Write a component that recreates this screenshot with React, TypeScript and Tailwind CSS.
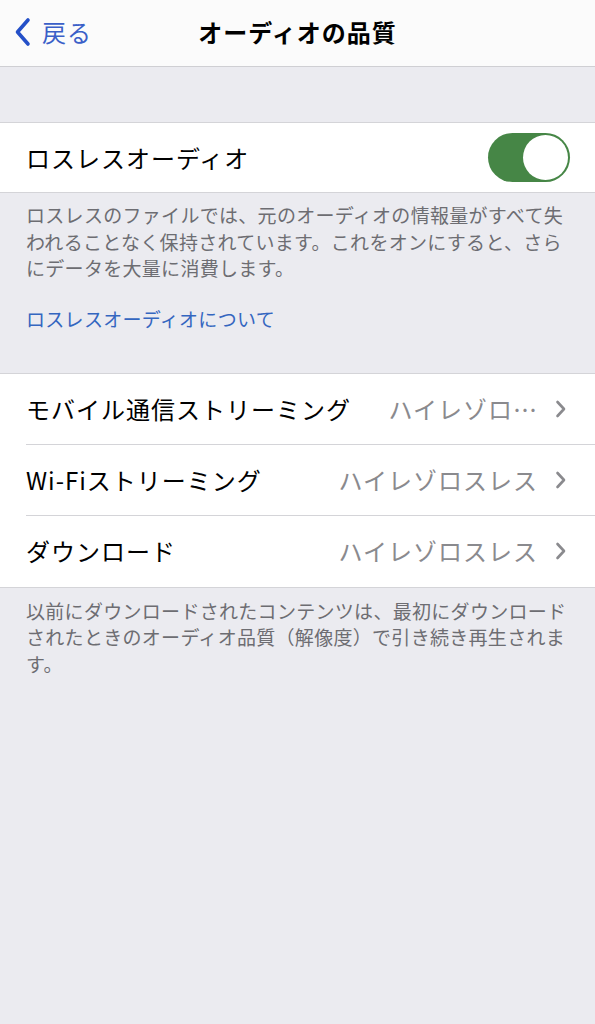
import React from 'react'

const FONT = { fontFamily: '"Noto Sans CJK JP", "Noto Sans", sans-serif' }

function Chevron() {
  return (
    <svg width="12" height="20" viewBox="0 0 12 20" fill="none" stroke="#8a8a8e" strokeWidth="2.6" strokeLinecap="round" strokeLinejoin="round">
      <polyline points="2.5 3 9 10 2.5 17" />
    </svg>
  )
}

function Row({ label, value, last }: { label: string; value: string; last?: boolean }) {
  return (
    <div className="flex h-[71px] items-center pl-[26px]">
      <div className={`flex h-full flex-1 items-center pr-[28px] ${last ? '' : 'border-b border-[#d4d4d8]'}`}>
        <span className="text-[24px] tracking-[1px] text-black whitespace-nowrap">{label}</span>
        <span className="ml-auto mr-[17px] text-[24px] tracking-[1px] text-[#8a8a8e] whitespace-nowrap">{value}</span>
        <Chevron />
      </div>
    </div>
  )
}

export default function App() {
  return (
    <div className="min-h-[1024px] w-[595px] bg-[#ebebf0]" style={FONT}>
      {/* Nav bar */}
      <div className="relative flex h-[67px] items-center border-b border-[#cfcfd3] bg-[#fbfbfb] pb-[3px]">
        <div className="flex items-center pl-[14px]">
          <svg width="18" height="30" viewBox="0 0 18 30" fill="none" stroke="#2450c8" strokeWidth="3.6" strokeLinecap="round" strokeLinejoin="round">
            <polyline points="14 3 3.5 15 14 27" />
          </svg>
          <span className="ml-[10px] text-[24px] tracking-[1px] text-[#3a5fc8]">戻る</span>
        </div>
        <div className="pointer-events-none absolute inset-x-0 top-0 flex h-full items-center justify-center pb-[3px]">
          <span className="text-[24px] font-bold tracking-[1px] text-black">オーディオの品質</span>
        </div>
      </div>

      <div className="h-[55px]" />

      {/* Lossless toggle */}
      <div className="flex h-[71px] items-center border-y border-[#d4d4d8] bg-white pl-[26px] pr-[25px]">
        <span className="text-[24px] tracking-[1px] text-black">ロスレスオーディオ</span>
        <div className="ml-auto flex h-[49px] w-[82px] items-center justify-end rounded-full bg-[#468646] pr-[2px]">
          <div className="h-[45px] w-[45px] rounded-full bg-white" />
        </div>
      </div>

      <div className="px-[26px] pt-[9px] text-[19px] leading-[26.5px] tracking-[0.3px] text-[#6d6d72]">
        ロスレスのファイルでは、元のオーディオの情報量がすべて失われることなく保持されています。これをオンにすると、さらにデータを大量に消費します。
      </div>
      <div className="px-[26px] pt-[24px] text-[19px] leading-[26px] tracking-[0.3px] text-[#3466c0]">
        ロスレスオーディオについて
      </div>

      <div className="h-[41px]" />

      {/* Streaming rows */}
      <div className="border-y border-[#d4d4d8] bg-white">
        <Row label="モバイル通信ストリーミング" value="ハイレゾロ…" />
        <Row label="Wi-Fiストリーミング" value="ハイレゾロスレス" />
        <Row label="ダウンロード" value="ハイレゾロスレス" last />
      </div>

      <div className="px-[26px] pt-[10px] text-[19px] leading-[26.5px] tracking-[0.3px] text-[#6d6d72]">
        以前にダウンロードされたコンテンツは、最初にダウンロードされたときのオーディオ品質（解像度）で引き続き再生されます。
      </div>
    </div>
  )
}
